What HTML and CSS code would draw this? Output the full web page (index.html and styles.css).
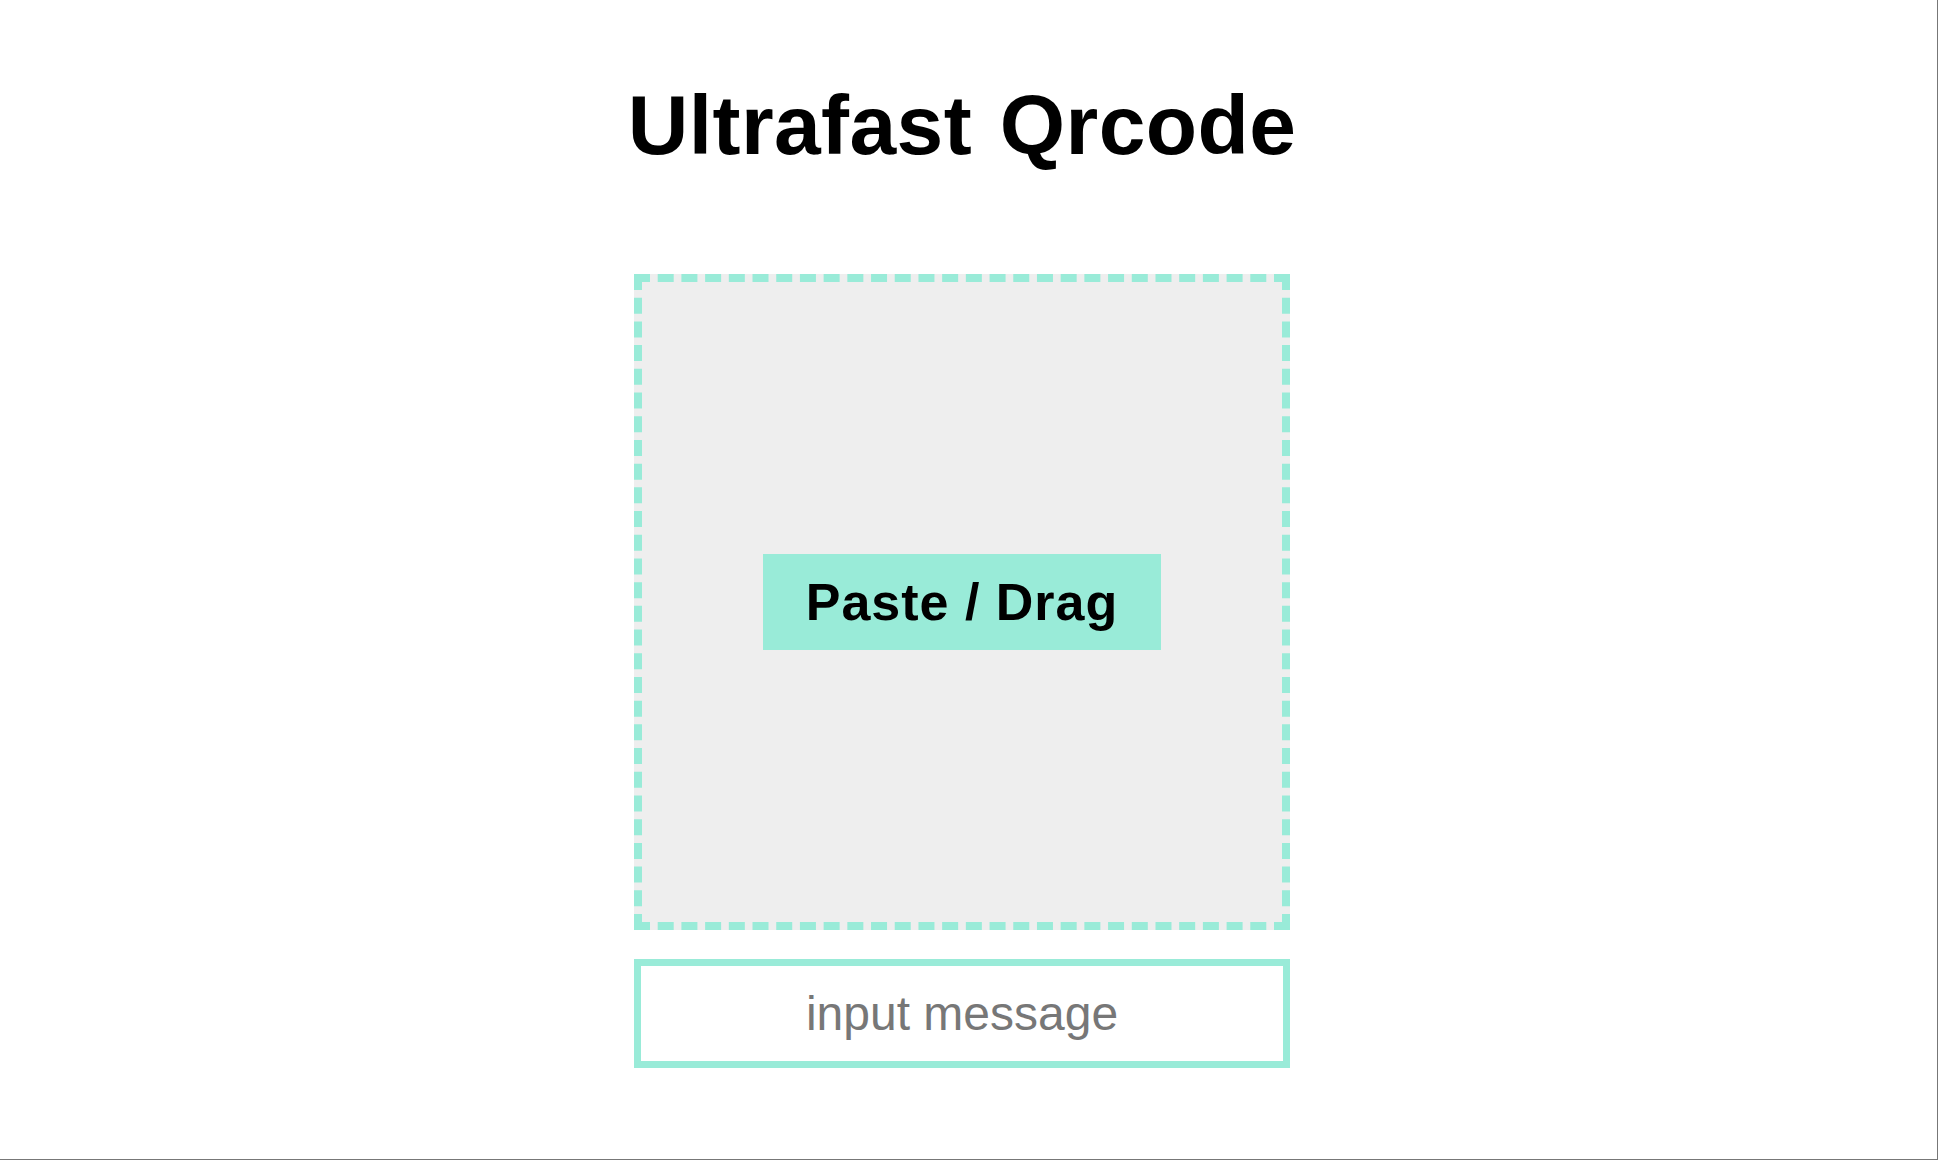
FILE: index.html
```html
<!DOCTYPE html>
<html lang="en">

<head>
    <meta charset="utf-8">
    <meta name="viewport" content="width=device-width, initial-scale=1">
    <title>Ultrafast Qrcode</title>
    <link rel="stylesheet" href="styles.css">
</head>

<body>
    <div id="app">
        <h1 class="title">Ultrafast Qrcode</h1>
        <!-- 貼り付け / ドラッグ領域 -->
        <div class="drop-area">
            <button class="paste-button">Paste / Drag</button>
        </div>
        <input class="message-input" type="text" placeholder="input message">
    </div>
</body>

</html>
```

FILE: styles.css
```css
html, body {
    margin: 0;
    padding: 0;
    background-color: #fff;
}
#app {
    box-sizing: border-box;
    height: 1160px;
    border-right: 1px solid #777;
    border-bottom: 1px solid #777;
    padding: 83px 13px 0 0;
    display: flex;
    flex-direction: column;
    align-items: center;
    font-family: "Liberation Sans", Arial, sans-serif;
}
.title {
    margin: 0;
    font-size: 84px;
    line-height: 84px;
    font-weight: bold;
    letter-spacing: 0.4px;
    word-spacing: 4px;
    color: #000;
}
.drop-area {
    box-sizing: border-box;
    width: 656px;
    height: 656px;
    margin-top: 107px;
    border: 8px dashed #99ebd8;
    background-color: #eee;
    display: flex;
    align-items: center;
    justify-content: center;
}
.paste-button {
    border: none;
    margin: 0;
    padding: 0;
    width: 398px;
    height: 96px;
    line-height: 96px;
    background-color: #99ebd8;
    font-family: "Liberation Sans", Arial, sans-serif;
    font-size: 52px;
    font-weight: bold;
    letter-spacing: 1px;
    color: #000;
}
.message-input {
    box-sizing: border-box;
    width: 656px;
    height: 109px;
    margin-top: 29px;
    border: 7px solid #99ebd8;
    outline: none;
    padding: 0;
    text-align: center;
    font-family: "Liberation Sans", Arial, sans-serif;
    font-size: 48px;
    color: #333;
}
.message-input::placeholder {
    color: #777;
}
```
